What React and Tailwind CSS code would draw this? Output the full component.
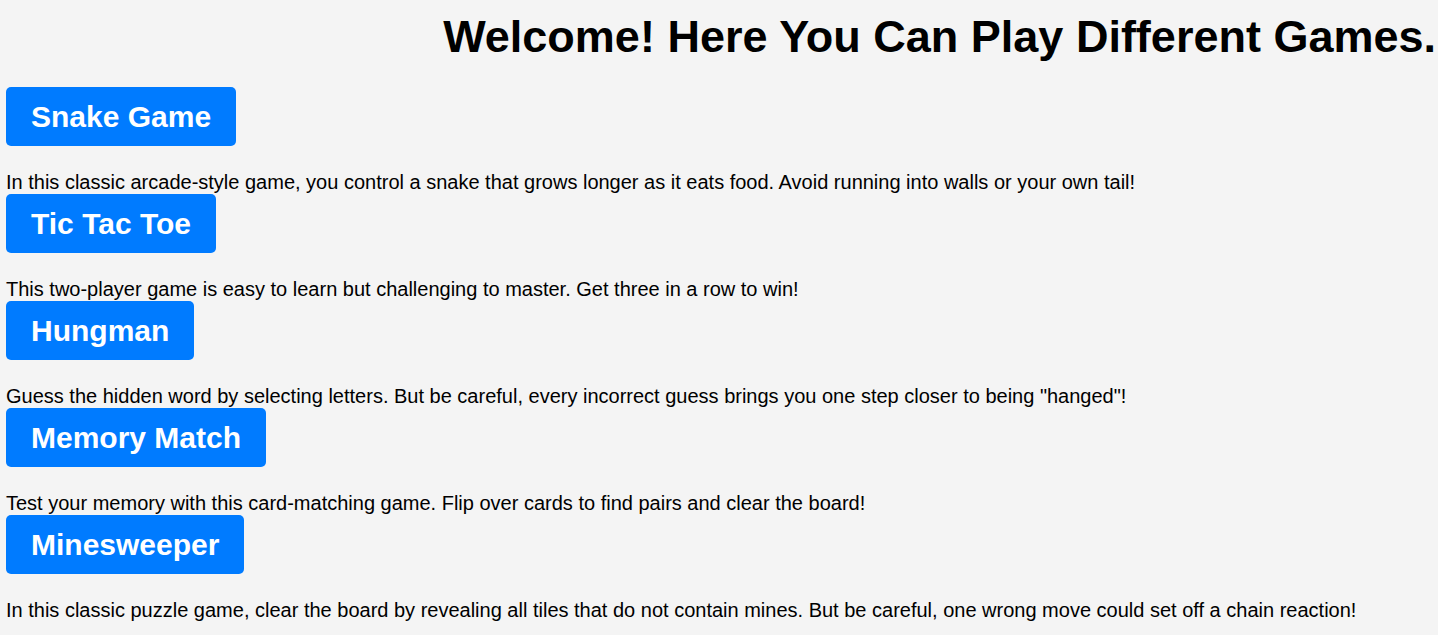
import React from 'react'

const games = [
  { name: 'Snake Game', text: 'In this classic arcade-style game, you control a snake that grows longer as it eats food. Avoid running into walls or your own tail!' },
  { name: 'Tic Tac Toe', text: 'This two-player game is easy to learn but challenging to master. Get three in a row to win!' },
  { name: 'Hungman', text: 'Guess the hidden word by selecting letters. But be careful, every incorrect guess brings you one step closer to being "hanged"!' },
  { name: 'Memory Match', text: 'Test your memory with this card-matching game. Flip over cards to find pairs and clear the board!' },
  { name: 'Minesweeper', text: 'In this classic puzzle game, clear the board by revealing all tiles that do not contain mines. But be careful, one wrong move could set off a chain reaction!' },
]

export default function App(){
  return (
    <div className="min-h-screen bg-[#f4f4f4] text-black font-['Liberation_Sans',Arial,sans-serif] px-[6px] pt-[11px]">
      <h1 className="text-right text-[45px] font-bold leading-[52px] mr-[-4px]">Welcome! Here You Can Play Different Games.</h1>
      <div className="flex flex-col items-start mt-[24px]">
        {games.map((g)=>(
          <div key={g.name} className="flex flex-col items-start">
            <button className="h-[59px] px-[25px] bg-[#007bff] text-white text-[30px] font-bold rounded-[5px] mb-[25px]">{g.name}</button>
            <p className="text-[20px] leading-[23px]">{g.text}</p>
          </div>
        ))}
      </div>
    </div>
  )
}
